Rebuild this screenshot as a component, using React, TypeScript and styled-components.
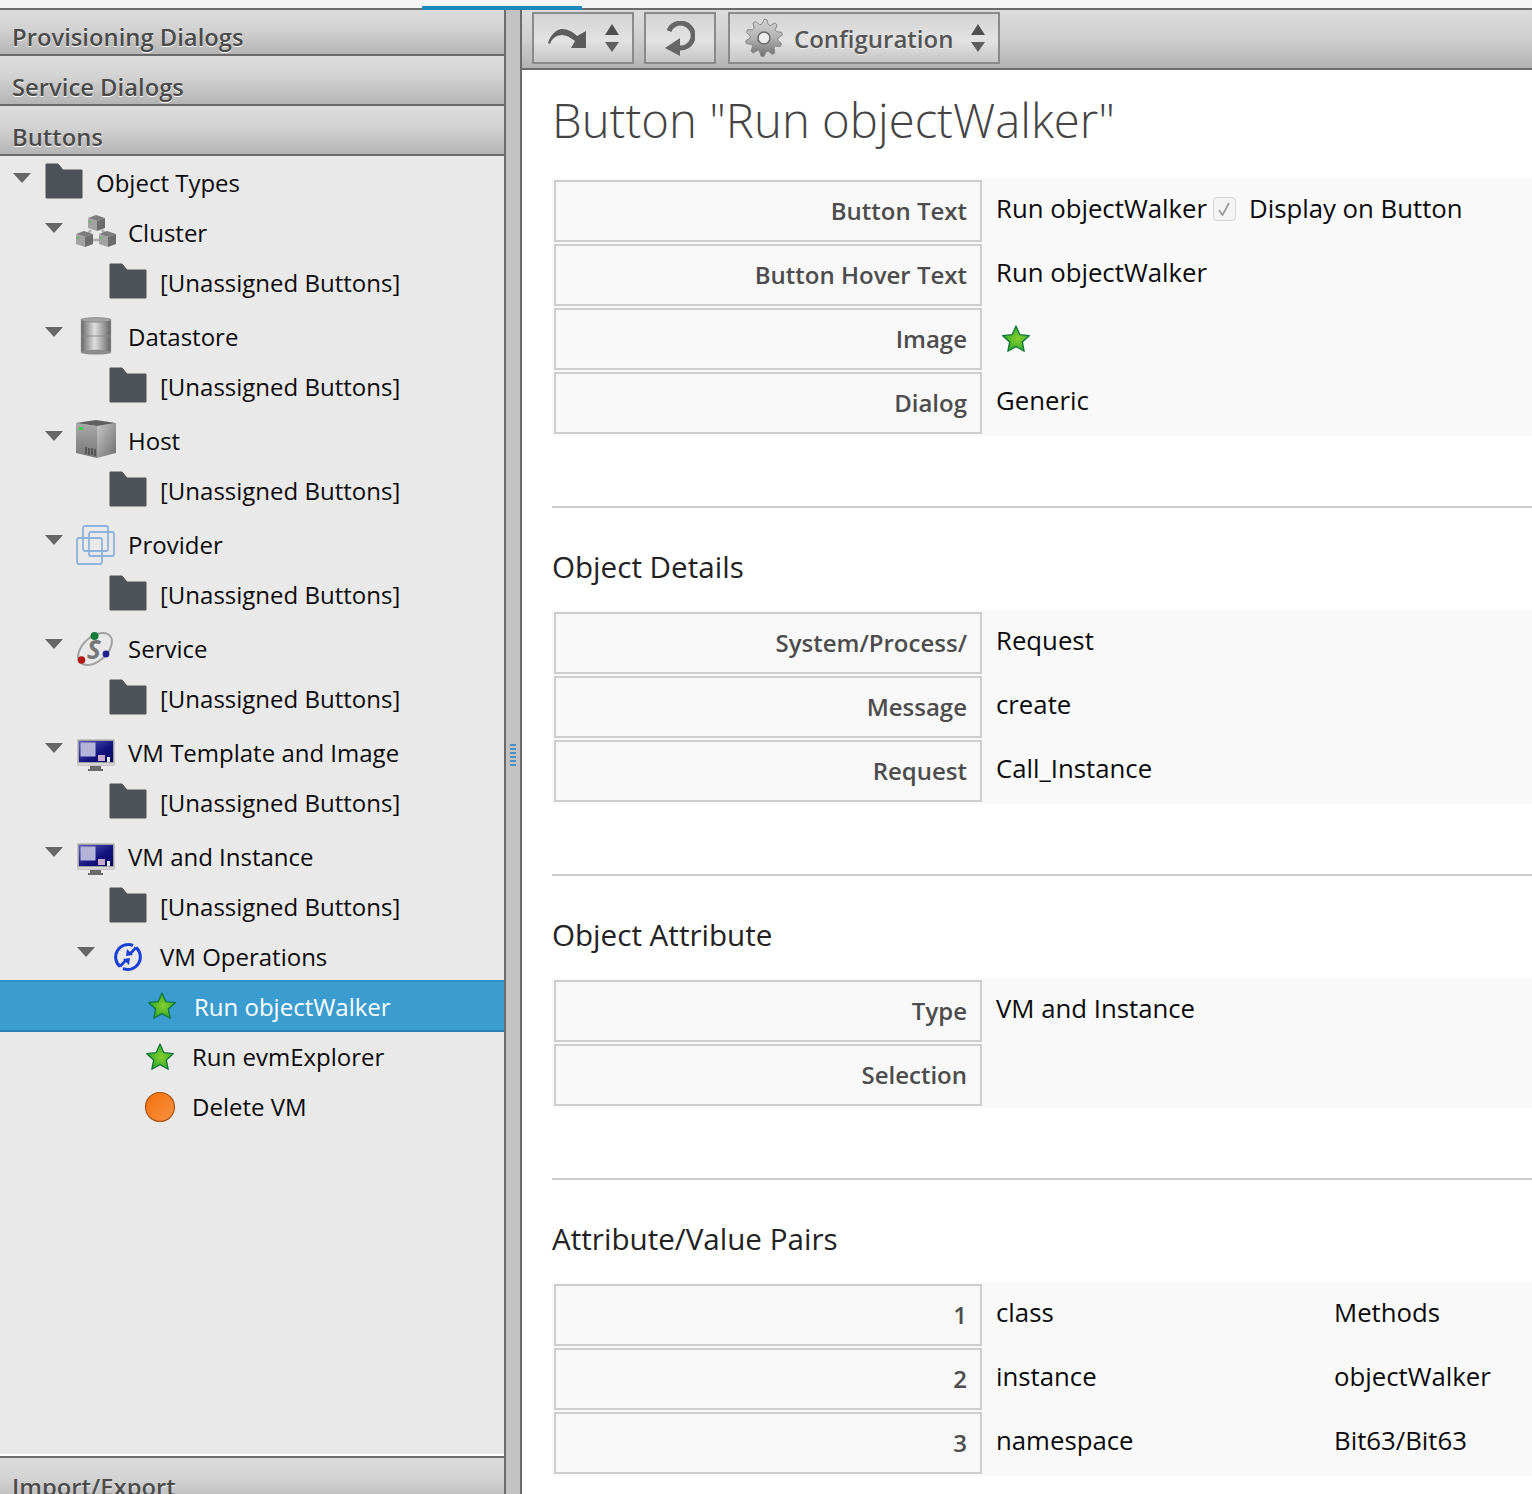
import React from 'react';
import styled, { createGlobalStyle } from 'styled-components';

const GlobalStyle = createGlobalStyle`
  html, body { margin: 0; padding: 0; background: #fff; }
  body { font-family: "Open Sans", "Liberation Sans", sans-serif; }
  * { box-sizing: border-box; }
`;

/* Icons */

const Folder = () => (
  <svg width="38" height="36" viewBox="0 0 38 36">
    <path d="M1 35V1h12l5 6h19v28z" fill="#4d5258" stroke="#4d5258" strokeWidth="1" strokeLinejoin="round" />
  </svg>
);

const Star = () => (
  <svg width="30" height="30" viewBox="0 0 30 30">
    <defs>
      <radialGradient id="starFill" cx="0.55" cy="0.5" r="0.6">
        <stop offset="0" stopColor="#86cf2c" />
        <stop offset="1" stopColor="#26a32b" />
      </radialGradient>
    </defs>
    <path
      d="M15 2l3.9 8.7 9.4 1-7 6.3 1.9 9.3L15 22.6l-8.2 4.7L8.7 18l-7-6.3 9.4-1z"
      fill="url(#starFill)"
      stroke="#11763a"
      strokeWidth="1.3"
      strokeLinejoin="round"
    />
  </svg>
);

const Ball = () => (
  <svg width="32" height="32" viewBox="0 0 32 32">
    <defs>
      <linearGradient id="ballFill" x1="0" y1="0" x2="1" y2="1">
        <stop offset="0" stopColor="#f56f0a" />
        <stop offset="1" stopColor="#f79243" />
      </linearGradient>
    </defs>
    <circle cx="16" cy="16" r="14.5" fill="url(#ballFill)" stroke="#a8551a" strokeWidth="1.2" />
  </svg>
);

const Cube = ({ x, y }: { x: number; y: number }) => (
  <g transform={`translate(${x} ${y})`}>
    <path d="M0 3l8-3 9 3-8 3z" fill="#7d7d7d" />
    <path d="M0 3l9 3v10l-9-3z" fill="#a2a2a2" />
    <path d="M9 6l8-3v10l-8 3z" fill="#6c6c6c" />
    <rect x="1" y="6" width="2" height="2" fill="#5fbf5f" />
  </g>
);

const Cluster = () => (
  <svg width="40" height="32" viewBox="0 0 40 32">
    <path d="M15 15l-5 6M26 15l5 6M16 25h8" fill="none" stroke="#ababab" strokeWidth="2.4" />
    <Cube x={12} y={0} />
    <Cube x={0} y={16} />
    <Cube x={23} y={16} />
  </svg>
);

const Datastore = () => (
  <svg width="34" height="38" viewBox="0 0 36 40" preserveAspectRatio="none">
    <defs>
      <linearGradient id="canFill" x1="0" y1="0" x2="1" y2="0">
        <stop offset="0" stopColor="#6d6d6d" />
        <stop offset="0.3" stopColor="#b8b8b8" />
        <stop offset="0.45" stopColor="#dedede" />
        <stop offset="0.75" stopColor="#a0a0a0" />
        <stop offset="1" stopColor="#666" />
      </linearGradient>
    </defs>
    <rect x="3" y="2" width="30" height="36" fill="url(#canFill)" />
    <rect x="2" y="3" width="1.5" height="34" fill="#777" />
    <rect x="32.5" y="3" width="1.5" height="34" fill="#777" />
    <ellipse cx="18" cy="3" rx="16" ry="2.4" fill="#a4a4a4" stroke="#777" strokeWidth="0.6" />
    <ellipse cx="18" cy="37" rx="16" ry="2.6" fill="#8b8b8b" />
    <path d="M3 20h30" stroke="#8a8a8a" strokeWidth="1" />
  </svg>
);

const Host = () => (
  <svg width="42" height="40" viewBox="0 0 42 40">
    <defs>
      <linearGradient id="hostFront" x1="0" y1="0" x2="0" y2="1">
        <stop offset="0" stopColor="#a9a9a9" />
        <stop offset="1" stopColor="#777" />
      </linearGradient>
      <linearGradient id="hostSide" x1="0" y1="0" x2="1" y2="1">
        <stop offset="0" stopColor="#c6c6c6" />
        <stop offset="1" stopColor="#6e6e6e" />
      </linearGradient>
    </defs>
    <path d="M1 4l21 3v32L1 34z" fill="url(#hostFront)" />
    <path d="M22 7l19-3v30l-19 5z" fill="url(#hostSide)" />
    <path d="M1 4l20-3 20 3-19 3z" fill="#5f5f5f" />
    <rect x="4" y="8" width="4" height="3" fill="#35d04a" />
    <path d="M11 28v7M14 29v7M17 29v7M20 30v7" stroke="#3a3a3a" strokeWidth="1.2" />
  </svg>
);

const Provider = () => (
  <svg width="40" height="40" viewBox="0 0 40 40" fill="none" stroke="#8fb2dc" strokeWidth="1.8">
    <rect x="7" y="1" width="25" height="25" rx="2" />
    <rect x="13" y="7" width="25" height="24" rx="2" />
    <rect x="1" y="13" width="25" height="26" rx="2" />
  </svg>
);

const Service = () => (
  <svg width="38" height="38" viewBox="0 0 38 38">
    <ellipse cx="18" cy="18" rx="20" ry="12" transform="rotate(-42 18 18)" fill="none" stroke="#a2a2a2" strokeWidth="2" />
    <text x="10" y="28" fontFamily="'Open Sans', sans-serif" fontSize="26" fontWeight="700" fontStyle="italic" fill="#777">
      S
    </text>
    <circle cx="17.5" cy="5" r="4" fill="#157a3a" />
    <circle cx="29" cy="23" r="3.4" fill="#20208f" />
    <circle cx="4.5" cy="29" r="3.8" fill="#b01818" />
  </svg>
);

const Monitor = () => (
  <svg width="38" height="32" viewBox="0 0 38 32">
    <defs>
      <linearGradient id="screenFill" x1="0" y1="0" x2="1" y2="1">
        <stop offset="0" stopColor="#5a5ac0" />
        <stop offset="0.6" stopColor="#12127c" />
        <stop offset="1" stopColor="#07075f" />
      </linearGradient>
    </defs>
    <rect x="0.5" y="0.5" width="37" height="26" fill="#a0a0a0" />
    <rect x="2" y="2" width="34" height="21" fill="url(#screenFill)" />
    <rect x="3.5" y="3.5" width="15" height="14" fill="#b4b4da" />
    <rect x="21" y="16" width="7" height="6" fill="#c8a8c8" />
    <rect x="30" y="18" width="3" height="5" fill="#e6e6f2" />
    <rect x="1" y="24" width="36" height="2" fill="#d6d6d6" />
    <path d="M13 27h11v3h2v2H11v-2h2z" fill="#6a6a6a" />
  </svg>
);

const VmOps = () => (
  <svg width="30" height="30" viewBox="0 0 30 30" fill="none" stroke="#1a3fd6" strokeWidth="3">
    <path d="M20 3.5A12.5 12.5 0 0 0 7 24.5" />
    <path d="M10 26.5A12.5 12.5 0 0 0 23 5.5" />
    <path d="M23 5.5L17 12" strokeWidth="2.6" />
    <path d="M7 24.5L13 18" strokeWidth="2.6" />
    <path d="M13 14l1-7 6 6z" fill="#1a3fd6" stroke="none" />
    <path d="M17 16l-1 7-6-6z" fill="#1a3fd6" stroke="none" />
  </svg>
);

const Updown = () => (
  <svg width="16" height="28" viewBox="0 0 16 28">
    <path d="M8 0l7 11H1z" fill="#4f4f4f" />
    <path d="M1 18h14l-7 10z" fill="#5f5f5f" />
  </svg>
);

const BackArrow = () => (
  <svg width="38" height="21" viewBox="0 0 38 21">
    <path d="M0 15C3 6 9 1 14 1c6 0 11 3 15 7l9-5v17H23l4-7c-5-4-9-6-13-6-5 0-10 3-12 9z" fill="#5c5c5c" />
  </svg>
);

const Reload = () => (
  <svg width="30" height="35" viewBox="0 0 30 35" fill="none" stroke="#666" strokeWidth="5">
    <path d="M4 10A12.5 12.5 0 1 1 14 27" />
    <path d="M15 17L0 27l15 8z" fill="#666" stroke="none" />
  </svg>
);

const gearPoints = Array.from({ length: 40 }, (_, i) => {
  // tooth pattern: two outer points then two root points, ten times round
  const angle = ((i * 9 - 90) * Math.PI) / 180;
  const radius = i % 4 < 2 ? 18.5 : 14;
  return `${(19 + radius * Math.cos(angle)).toFixed(1)},${(19 + radius * Math.sin(angle)).toFixed(1)}`;
}).join(' ');

const Gear = () => (
  <svg width="38" height="38" viewBox="0 0 38 38">
    <defs>
      <linearGradient id="gearFill" x1="0" y1="0" x2="0" y2="1">
        <stop offset="0" stopColor="#d2d2d2" />
        <stop offset="0.5" stopColor="#b2b2b2" />
        <stop offset="1" stopColor="#6f6f6f" />
      </linearGradient>
    </defs>
    <polygon points={gearPoints} fill="url(#gearFill)" stroke="#8a8a8a" strokeWidth="1" strokeLinejoin="round" />
    <circle cx="19" cy="19" r="6" fill="#ececec" stroke="#6a6a6a" strokeWidth="1.6" />
  </svg>
);

/* Data */

type Node = {
  label: string;
  level: number;
  icon: React.ReactNode;
  shift?: number;
  open?: boolean;
  tall?: boolean;
  selected?: boolean;
};

const unassigned = (): Node => ({ label: '[Unassigned Buttons]', level: 2, icon: <Folder />, shift: -2 });

const treeNodes: Node[] = [
  { label: 'Object Types', level: 0, icon: <Folder />, shift: -2, open: true },
  { label: 'Cluster', level: 1, icon: <Cluster />, shift: -2, open: true },
  unassigned(),
  { label: 'Datastore', level: 1, icon: <Datastore />, shift: -1, open: true, tall: true },
  unassigned(),
  { label: 'Host', level: 1, icon: <Host />, shift: -2, open: true, tall: true },
  unassigned(),
  { label: 'Provider', level: 1, icon: <Provider />, open: true, tall: true },
  unassigned(),
  { label: 'Service', level: 1, icon: <Service />, shift: 1, open: true, tall: true },
  unassigned(),
  { label: 'VM Template and Image', level: 1, icon: <Monitor />, shift: 2, open: true, tall: true },
  unassigned(),
  { label: 'VM and Instance', level: 1, icon: <Monitor />, shift: 2, open: true, tall: true },
  unassigned(),
  { label: 'VM Operations', level: 2, icon: <VmOps />, open: true },
  { label: 'Run objectWalker', level: 3, icon: <Star />, selected: true },
  { label: 'Run evmExplorer', level: 3, icon: <Star /> },
  { label: 'Delete VM', level: 3, icon: <Ball /> },
];

const sections = [
  {
    title: 'Object Details',
    rows: [
      ['System/Process/', 'Request'],
      ['Message', 'create'],
      ['Request', 'Call_Instance'],
    ],
  },
  {
    title: 'Object Attribute',
    rows: [
      ['Type', 'VM and Instance'],
      ['Selection', ''],
    ],
  },
];

const pairs = [
  ['1', 'class', 'Methods'],
  ['2', 'instance', 'objectWalker'],
  ['3', 'namespace', 'Bit63/Bit63'],
];

export default function App() {
  return (
    <Page>
      <GlobalStyle />
      <TopStrip>
        <ActiveTab />
      </TopStrip>
      <Columns>
        <Sidebar>
          <PanelHeader>Provisioning Dialogs</PanelHeader>
          <PanelHeader>Service Dialogs</PanelHeader>
          <PanelHeader>Buttons</PanelHeader>
          <Tree>
            {treeNodes.map((node, i) => (
              <Row key={i} $level={node.level} $tall={node.tall} $selected={node.selected}>
                <Twist>{node.open && <Caret />}</Twist>
                <IconSlot $shift={node.shift ?? 0}>{node.icon}</IconSlot>
                <RowLabel $selected={node.selected}>{node.label}</RowLabel>
              </Row>
            ))}
          </Tree>
          <PanelHeader>Import/Export</PanelHeader>
        </Sidebar>
        <Splitter>
          <Grip />
        </Splitter>
        <Main>
          <Toolbar>
            <ToolButton $width={102} $padding={14} $gap={18}>
              <BackArrow />
              <Updown />
            </ToolButton>
            <ToolButton $width={72} $padding={19}>
              <Reload />
            </ToolButton>
            <ConfigButton $width={272} $padding={15} $gap={11}>
              <Gear />
              <ToolLabel>Configuration</ToolLabel>
              <SpacedUpdown>
                <Updown />
              </SpacedUpdown>
            </ConfigButton>
          </Toolbar>
          <Content>
            <Title>Button "Run objectWalker"</Title>
            <InfoTable>
              <tbody>
                <tr>
                  <Label>Button Text</Label>
                  <Value>
                    <InlineValue>
                      Run objectWalker
                      <Checkbox>
                        <svg width="14" height="14" viewBox="0 0 14 14" fill="none" stroke="#9c9c9c" strokeWidth="1.8">
                          <path d="M2 8l3.5 5L12 1" />
                        </svg>
                      </Checkbox>
                      Display on Button
                    </InlineValue>
                  </Value>
                </tr>
                <tr>
                  <Label>Button Hover Text</Label>
                  <Value>Run objectWalker</Value>
                </tr>
                <tr>
                  <Label>Image</Label>
                  <Value>
                    <ImageValue>
                      <Star />
                    </ImageValue>
                  </Value>
                </tr>
                <tr>
                  <Label>Dialog</Label>
                  <Value>Generic</Value>
                </tr>
              </tbody>
            </InfoTable>

            {sections.map((section) => (
              <Section key={section.title}>
                <SectionTitle>{section.title}</SectionTitle>
                <InfoTable>
                  <tbody>
                    {section.rows.map(([label, value]) => (
                      <tr key={label}>
                        <Label>{label}</Label>
                        <Value>{value}</Value>
                      </tr>
                    ))}
                  </tbody>
                </InfoTable>
              </Section>
            ))}

            <Section>
              <SectionTitle>Attribute/Value Pairs</SectionTitle>
              <InfoTable>
                <tbody>
                  {pairs.map(([num, name, value]) => (
                    <tr key={num}>
                      <Label>{num}</Label>
                      <Value $width={336}>{name}</Value>
                      <Value>{value}</Value>
                    </tr>
                  ))}
                </tbody>
              </InfoTable>
            </Section>
          </Content>
        </Main>
      </Columns>
    </Page>
  );
}

/* Styled Components */

const Page = styled.div`
  width: 1532px;
  height: 1494px;
  overflow: hidden;
  background: #fff;
`;

const TopStrip = styled.div`
  position: relative;
  height: 10px;
  background: #f5f5f5;
  border-bottom: 2px solid #6b6b6b;
`;

const ActiveTab = styled.div`
  position: absolute;
  left: 422px;
  top: 6px;
  width: 160px;
  height: 4px;
  background: #1a87bd;
`;

const Columns = styled.div`
  display: flex;
  height: 1484px;
`;

const Sidebar = styled.aside`
  width: 504px;
  flex: none;
  display: flex;
  flex-direction: column;
`;

const PanelHeader = styled.div`
  flex: none;
  height: 50px;
  padding: 15px 0 0 12px;
  font-size: 23.8px;
  line-height: 32px;
  font-weight: 600;
  color: #4a4a4a;
  text-shadow: 0 1px 0 #fff;
  background: linear-gradient(#dcdcdc, #d2d2d2 45%, #b4b4b4);
  border-bottom: 2px solid #6b6b6b;

  &:first-child {
    height: 46px;
    padding-top: 11px;
  }

  &:last-child {
    padding-top: 13px;
    border-top: 2px solid #6b6b6b;
    border-bottom: 0;
  }
`;

const Tree = styled.div`
  flex: none;
  height: 1300px;
  background: #e9e9e9;
  padding-top: 2px;
  border-bottom: 2px solid #fff;
`;

const Row = styled.div<{ $level: number; $tall?: boolean; $selected?: boolean }>`
  display: flex;
  align-items: center;
  height: 50px;
  padding-left: ${(p) => 6 + p.$level * 32}px;
  margin-top: ${(p) => (p.$tall ? '4px' : '0')};
  color: #0a0a0a;
  font-size: 24px;

  ${(p) =>
    p.$selected &&
    `
    margin-top: -2px;
    height: 52px;
    padding-left: ${8 + p.$level * 32}px;
    color: #fff;
    font-weight: 500;
    background: #3a9ccf;
    border-top: 2px solid #2f8fc4;
    border-bottom: 2px solid #2a80b5;
  `}
`;

const Twist = styled.span`
  flex: none;
  width: 32px;
  display: flex;
  justify-content: center;
`;

const Caret = styled.i`
  width: 0;
  height: 0;
  margin-bottom: 10px;
  border-left: 9px solid transparent;
  border-right: 9px solid transparent;
  border-top: 10px solid #666;
`;

const IconSlot = styled.span<{ $shift: number }>`
  flex: none;
  width: 58px;
  padding-right: 7px;
  display: flex;
  align-items: center;
  justify-content: center;
  transform: translateY(${(p) => p.$shift}px);
`;

const RowLabel = styled.span<{ $selected?: boolean }>`
  white-space: nowrap;
  margin-bottom: ${(p) => (p.$selected ? '0' : '2px')};
`;

const Splitter = styled.div`
  flex: none;
  width: 18px;
  display: flex;
  align-items: center;
  justify-content: center;
  padding-top: 6px;
  background: #c2c2c2;
  border-left: 2px solid #6b6b6b;
  border-right: 2px solid #6b6b6b;
`;

const Grip = styled.div`
  width: 6px;
  height: 22px;
  background: repeating-linear-gradient(#4a8fc0 0 2px, transparent 2px 4px);
`;

const Main = styled.main`
  flex: 1;
  min-width: 0;
  display: flex;
  flex-direction: column;
`;

const Toolbar = styled.div`
  flex: none;
  height: 60px;
  display: flex;
  gap: 10px;
  padding: 2px 0 0 10px;
  background: linear-gradient(#dcdcdc, #cfcfcf 50%, #b2b2b2);
  border-bottom: 2px solid #6b6b6b;
`;

const ToolButton = styled.div<{ $width: number; $padding: number; $gap?: number }>`
  width: ${(p) => p.$width}px;
  height: 52px;
  display: flex;
  align-items: center;
  gap: ${(p) => p.$gap ?? 0}px;
  padding-left: ${(p) => p.$padding}px;
  background: linear-gradient(#d4d4d4, #e2e2e2 55%, #c6c6c6);
  border: 2px solid #8a8a8a;
`;

const ConfigButton = styled(ToolButton)`
  margin-left: 2px;
`;

const ToolLabel = styled.span`
  font-size: 24px;
  font-weight: 600;
  color: #555;
  text-shadow: 0 1px 0 #eee;
`;

const SpacedUpdown = styled.span`
  display: flex;
  margin-left: 6px;
`;

const Content = styled.div`
  flex: 1;
  padding-left: 30px;
  overflow: hidden;
`;

const Title = styled.h1`
  margin: 17px 0 25px;
  height: 66px;
  font-size: 47.3px;
  line-height: 66px;
  font-weight: 300;
  color: #444;
  white-space: nowrap;
`;

const InfoTable = styled.table`
  width: 980px;
  table-layout: fixed;
  border-collapse: separate;
  border-spacing: 2px;
  background: #f9f9f9;
`;

const Label = styled.td`
  width: 428px;
  height: 62px;
  padding: 12px 13px 0 0;
  vertical-align: top;
  text-align: right;
  font-size: 24px;
  line-height: 34px;
  font-weight: 600;
  color: #4d4d4d;
  background: #f8f8f8;
  border: 2px solid #cdcdcd;
`;

const Value = styled.td<{ $width?: number }>`
  ${(p) => (p.$width ? `width: ${p.$width}px;` : '')}
  padding: 10px 0 0 12px;
  vertical-align: top;
  font-size: 25.75px;
  line-height: 36px;
  color: #0a0a0a;
  white-space: nowrap;
`;

const InlineValue = styled.span`
  display: flex;
  align-items: center;
`;

const Checkbox = styled.span`
  width: 23px;
  height: 24px;
  margin: 2px 13px 0 6px;
  display: flex;
  align-items: center;
  justify-content: center;
  background: #f4f4f4;
  border: 1.5px solid #d4d4d4;
  border-radius: 4px;
`;

const ImageValue = styled.span`
  display: flex;
  padding: 6px 0 0 5px;
`;

const Section = styled.section`
  margin-top: 70px;
  padding-top: 39px;
  border-top: 2px solid #cfcfcf;
`;

const SectionTitle = styled.h2`
  margin: 0 0 23px;
  height: 40px;
  font-size: 29.6px;
  line-height: 40px;
  font-weight: 400;
  color: #222;
`;
